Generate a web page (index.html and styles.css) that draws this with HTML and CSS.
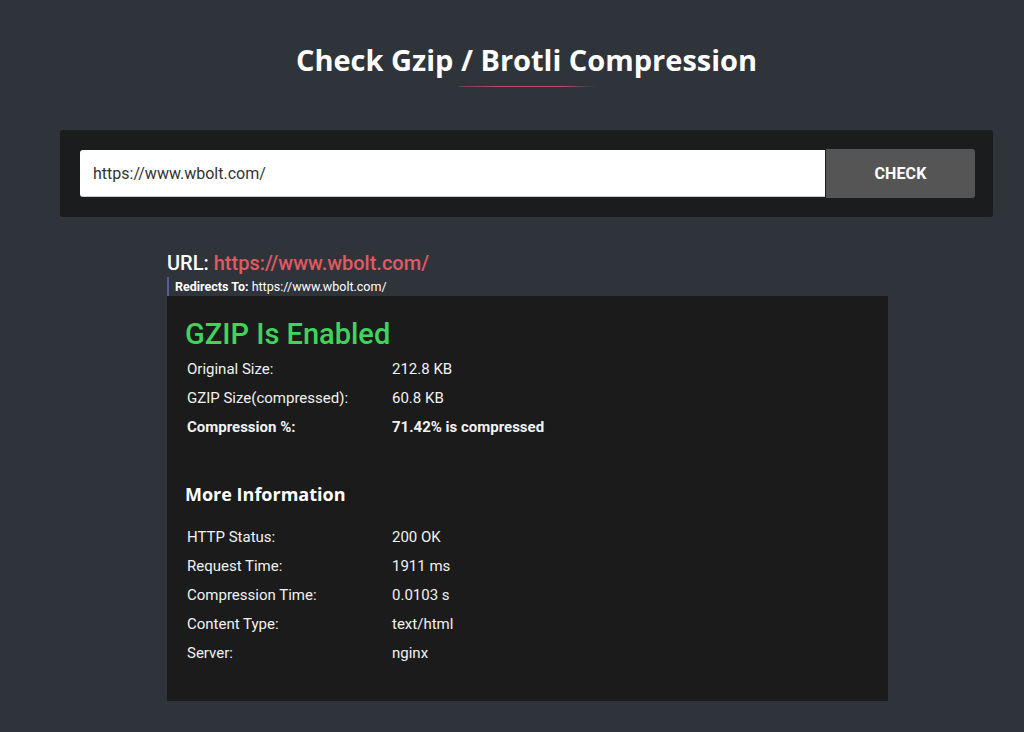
FILE: index.html
```html
<!DOCTYPE html>
<html lang="en">
<head>
<meta charset="utf-8">
<title>Check Gzip / Brotli Compression</title>
<link rel="stylesheet" href="styles.css">
</head>
<body>
<div class="page">
  <header class="head">
    <h1 class="title">Check Gzip / Brotli Compression</h1>
    <div class="title-line"></div>
  </header>
  <form class="search">
    <input class="search-input" type="text" value="https://www.wbolt.com/">
    <button class="search-btn" type="button">CHECK</button>
  </form>
  <section class="result">
    <div class="url-line"><span class="url-label">URL:</span> <span class="url-value">https://www.wbolt.com/</span></div>
    <div class="redirect"><b>Redirects To:</b> https://www.wbolt.com/</div>
    <div class="card">
      <h2 class="status">GZIP Is Enabled</h2>
      <div class="rows">
        <div class="row"><span class="k">Original Size:</span><span class="v">212.8 KB</span></div>
        <div class="row"><span class="k">GZIP Size(compressed):</span><span class="v">60.8 KB</span></div>
        <div class="row strong"><span class="k">Compression %:</span><span class="v">71.42% is compressed</span></div>
      </div>
      <h3 class="more">More Information</h3>
      <div class="rows">
        <div class="row"><span class="k">HTTP Status:</span><span class="v">200 OK</span></div>
        <div class="row"><span class="k">Request Time:</span><span class="v">1911 ms</span></div>
        <div class="row"><span class="k">Compression Time:</span><span class="v">0.0103 s</span></div>
        <div class="row"><span class="k">Content Type:</span><span class="v">text/html</span></div>
        <div class="row"><span class="k">Server:</span><span class="v">nginx</span></div>
      </div>
    </div>
  </section>
</div>
</body>
</html>
```
FILE: styles.css
```css
html, body {
  margin: 0;
  padding: 0;
  background: #2f333a;
  height: 100%;
  overflow: hidden;
}
body {
  font-family: Roboto, "Liberation Sans", sans-serif;
  color: #ffffff;
}
.page {
  padding: 40px 31px 0 60px;
}
.head {
  display: flex;
  flex-direction: column;
  align-items: center;
}
.title {
  margin: 0;
  font-family: "Open Sans", sans-serif;
  font-weight: 700;
  font-size: 29px;
  line-height: 40px;
  color: #ffffff;
}
.title-line {
  width: 138px;
  height: 1px;
  margin-top: 6px;
  margin-left: 2px;
  background: linear-gradient(90deg, rgba(180,70,90,0.5), #b8506a 30%, #b8506a 75%, rgba(180,70,90,0));
}
.search {
  display: flex;
  margin: 43px 0 0 0;
  width: 933px;
  box-sizing: border-box;
  padding: 19px 18px 19px 20px;
  background: #1b1c1e;
  border-radius: 3px;
  align-items: center;
}
.search-input {
  flex: 1;
  height: 47px;
  box-sizing: border-box;
  border: none;
  border-radius: 3px 0 0 3px;
  padding: 0 13px;
  font-family: Roboto, sans-serif;
  font-size: 16px;
  color: #333;
  background: #fff;
  outline: none;
  border-bottom: 1px solid #ccc;
}
.search-btn {
  width: 149px;
  height: 49px;
  margin-left: 1px;
  border: none;
  border-radius: 0 3px 3px 0;
  background: #555555;
  color: #fff;
  font-family: Roboto, sans-serif;
  font-weight: 700;
  font-size: 16px;
  letter-spacing: 0.1px;
}
.result {
  width: 721px;
  margin: 34px 0 0 107px;
}
.url-line {
  font-size: 20px;
  line-height: 24px;
  font-weight: 500;
}
.url-value {
  color: #e05a62;
}
.redirect {
  margin-top: 2px;
  border-left: 2px solid #5b5a9c;
  padding-left: 6px;
  font-size: 12.5px;
  line-height: 19px;
  color: #fff;
}
.redirect b {
  font-weight: 700;
}
.card {
  background: #1b1b1c;
  padding: 20px 18px 32px 18px;
  height: 405px;
  box-sizing: border-box;
}
.status {
  margin: 0 0 3px 0;
  font-size: 29px;
  line-height: 36px;
  font-weight: 500;
  color: #3fd45b;
}
.rows {
  padding-left: 2px;
}
.row {
  display: flex;
  font-size: 15px;
  line-height: 29px;
  color: #f2f2f2;
}
.row .k {
  width: 205px;
}
.row.strong {
  font-weight: 700;
}
.more {
  margin: 40px 0 17px 0;
  font-family: "Open Sans", sans-serif;
  font-weight: 700;
  font-size: 18px;
  line-height: 24px;
}
```
